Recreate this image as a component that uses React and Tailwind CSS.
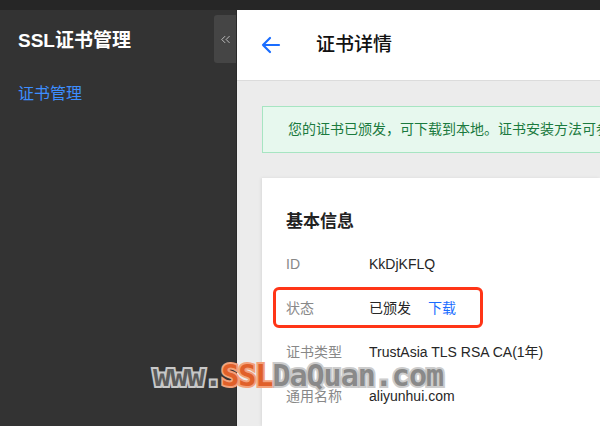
import { ChevronsLeft } from "lucide-react";

const rows = [
  { label: "ID", value: "KkDjKFLQ" },
  { label: "状态", value: "已颁发", link: "下载" },
  { label: "证书类型", value: "TrustAsia TLS RSA CA(1年)" },
  { label: "通用名称", value: "aliyunhui.com" },
];

const App = () => {
  return (
    <div className="relative w-[600px] h-[426px] overflow-hidden bg-[#262626] pt-[10px] flex flex-col font-['Liberation_Sans','Noto_Sans_CJK_SC',sans-serif]">
      <div className="flex flex-1 min-h-0">
        {/* sidebar */}
        <div className="w-[237px] shrink-0 flex bg-[#333333] border-r border-[#2a2a2a]">
          <div className="w-[214px] pl-[18px] pt-[19px]">
            <div className="text-[19px] leading-[24px] font-bold text-white">SSL证书管理</div>
            <div className="mt-[30px] text-[16px] leading-[22px] text-[#3d8eff]">证书管理</div>
          </div>
          <div className="flex-1 pt-[5px]">
            <div className="h-[48px] bg-[#454545] rounded-l-[3px] flex items-center justify-center">
              <ChevronsLeft size={15} strokeWidth={1.5} className="text-[#c4c4c4]" />
            </div>
          </div>
        </div>

        {/* main */}
        <div className="flex-1 min-w-0 bg-[#ececec] flex flex-col">
          <div className="h-[71px] shrink-0 bg-white border-b border-[#dcdcdc] flex items-center pl-[24px]">
            <svg width="20" height="18" viewBox="0 0 20 18" fill="none" stroke="#1a6dff" strokeWidth="2.2" strokeLinecap="round" strokeLinejoin="round">
              <path d="M18 9H2M9 2L2 9l7 7" />
            </svg>
            <div className="ml-[35px] text-[19px] leading-[24px] font-medium text-[#111]">证书详情</div>
          </div>

          <div className="pl-[25px] pt-[25px] flex-1 flex flex-col">
            <div className="h-[47px] shrink-0 border border-r-0 border-[#a7e5c2] bg-[#e7f8ee] flex items-center pl-[25px] text-[14px] text-[#1b7a3e] whitespace-nowrap overflow-hidden">
              您的证书已颁发，可下载到本地。证书安装方法可参考帮助文档
            </div>

            <div className="relative mt-[25px] flex-1 bg-white shadow-[-1px_0_3px_rgba(0,0,0,0.08)] pl-[24px] pt-[32px]">
              <div className="text-[17px] leading-[24px] font-bold text-[#222]">基本信息</div>
              <div className="mt-[8px]">
                {rows.map((r) => (
                  <div key={r.label} className="h-[44px] flex items-center text-[14px]">
                    <div className="w-[83px] text-[#888]">{r.label}</div>
                    <div className="text-[#262626]">{r.value}</div>
                    {r.link && <div className="ml-[17px] text-[#1a6dff]">{r.link}</div>}
                  </div>
                ))}
              </div>
              {/* annotation box */}
              <div className="absolute left-[11px] top-[109px] w-[210px] h-[41px] border-[3px] border-[#ff3517] rounded-[6px]" />
            </div>
          </div>
        </div>
      </div>

      {/* watermark */}
      <div className="absolute left-[153px] top-[358px] text-[30px] leading-[36px] font-bold tracking-[-1px] whitespace-nowrap font-['DejaVu_Sans_Mono',monospace] [paint-order:stroke_fill]">
        <span className="text-[#5a5a5a] [-webkit-text-stroke:4px_#c8c8c8]">www.</span>
        <span className="text-[#e0602a] [-webkit-text-stroke:4px_#f2a27c]">SSL</span>
        <span className="text-[#777777]/80 [-webkit-text-stroke:4px_rgba(190,190,190,0.8)]">DaQuan.com</span>
      </div>
    </div>
  );
};

export default App;
